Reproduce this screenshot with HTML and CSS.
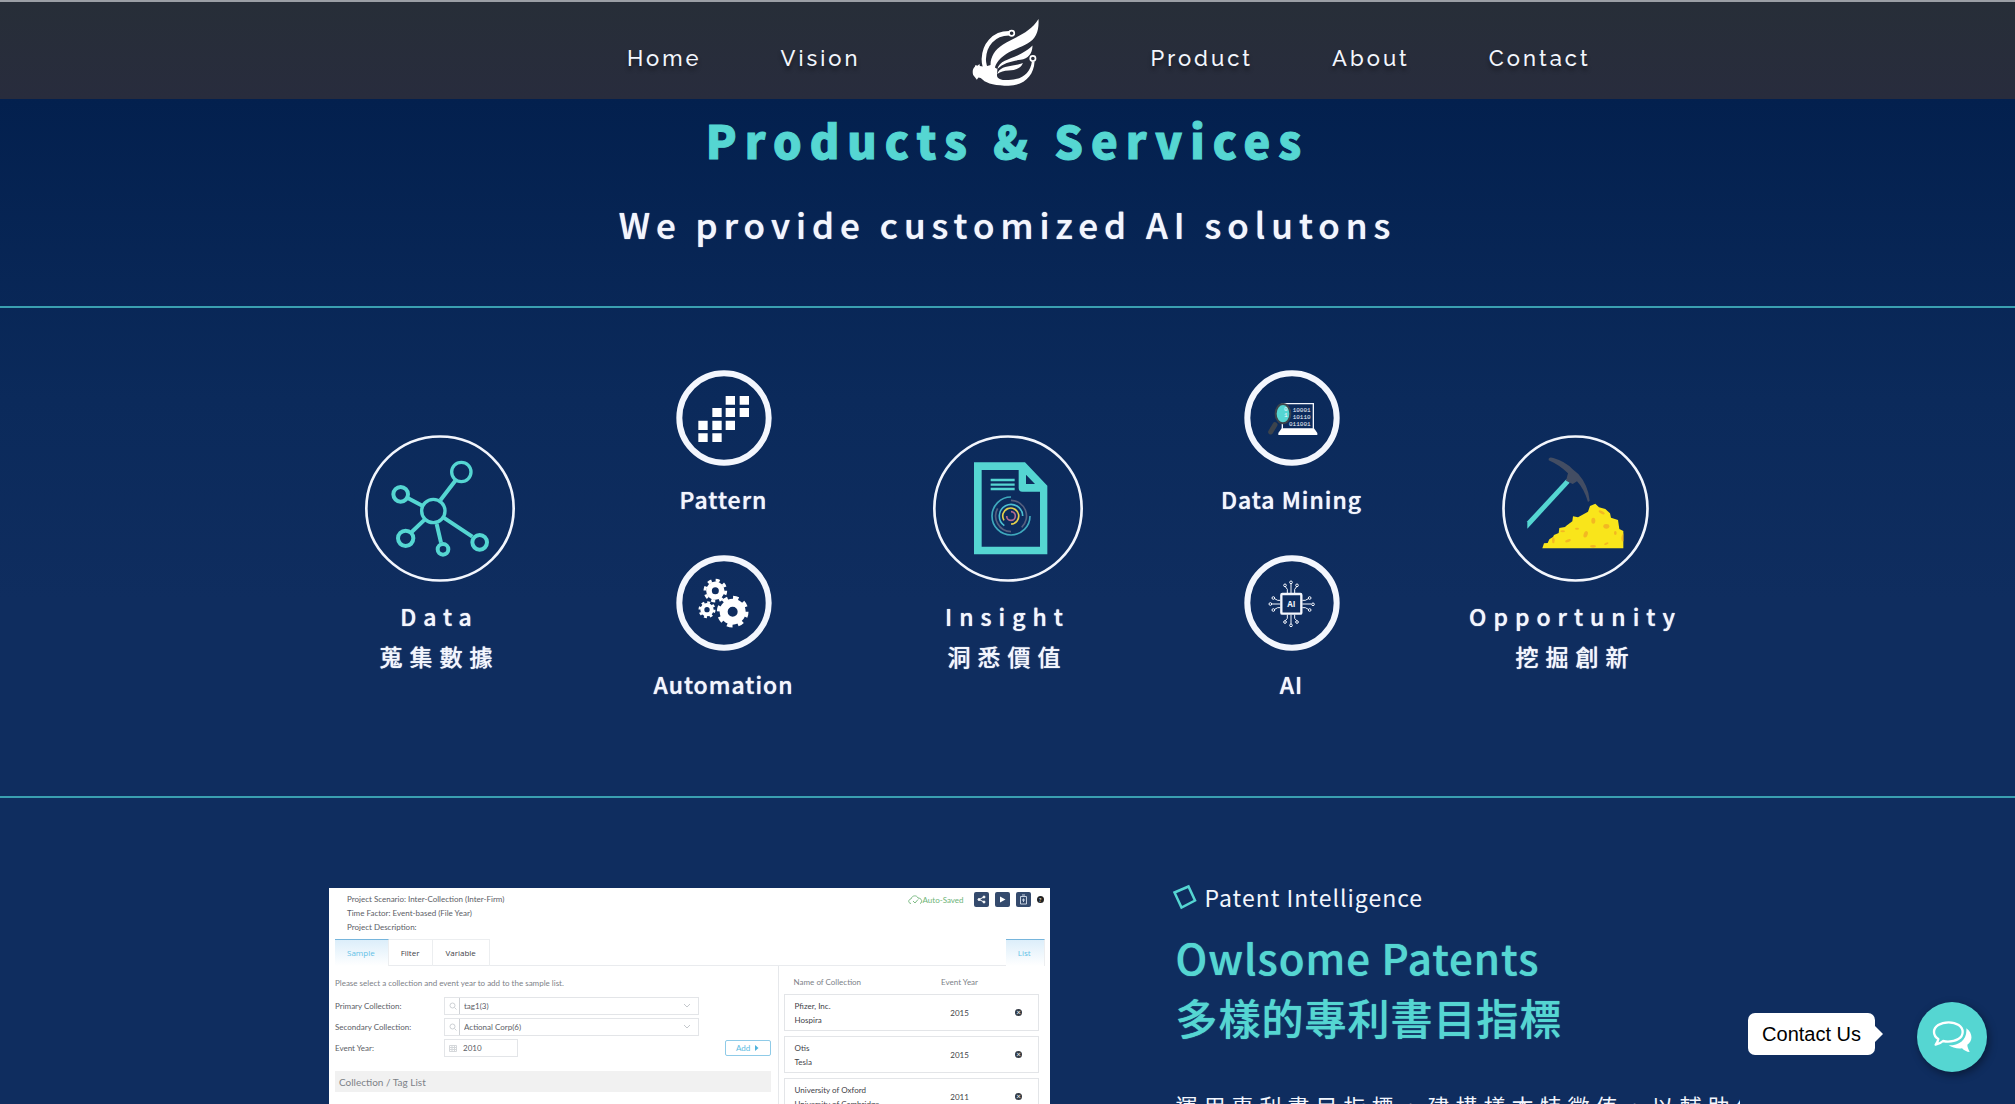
FILE: index.html
```html
<!DOCTYPE html>
<html lang="zh-Hant">
<head>
<meta charset="utf-8">
<meta name="viewport" content="width=device-width, initial-scale=1">
<title>Products &amp; Services</title>
<link rel="stylesheet" href="styles.css">
</head>
<body>
<header class="site-header">
  <nav class="nav nav-left" aria-label="Primary">
    <a href="#home">Home</a>
    <a href="#vision">Vision</a>
  </nav>
  <a class="logo" href="#home" aria-label="Homepage">
    <svg viewBox="96 54 204 208" width="68" height="69" fill="#fff">
      <path d="M296 57C298 94 288 116 264 130C235 147 190 158 171 189C166 196 165 202 164 207L152 205C148 176 162 152 188 135C225 111 270 100 296 57Z"/>
      <path d="M278 137C277 163 265 176 242 180C215 184 190 189 172 208C177 182 214 178 243 162C260 152 270 146 278 137Z"/>
      <path d="M249 190C243 206 226 212 206 212C192 213 181 215 172 223C176 204 198 200 218 197C232 195 242 193 249 190Z"/>
      <path d="M207 100C160 100 132 136 131 178C131 192 135 205 142 216" fill="none" stroke="#fff" stroke-width="13"/>
      <circle cx="215" cy="100" r="8" fill="none" stroke="#fff" stroke-width="5"/>
      <circle cx="279" cy="176" r="8" fill="none" stroke="#fff" stroke-width="5"/>
      <path d="M276 185L284 186C282 228 252 258 206 258C170 258 140 252 128 240C123 235 120 233 115 233L110 240L105 233L99 226C96 215 98 206 104 201L106 196L112 198L118 193L119 199C128 201 142 200 152 196L172 208L171 224C169 237 184 242 206 241C246 240 272 220 276 185Z"/>
    </svg>
  </a>
  <nav class="nav nav-right" aria-label="Secondary">
    <a href="#product">Product</a>
    <a href="#about">About</a>
    <a href="#contact">Contact</a>
  </nav>
</header>

<main>
  <section class="hero">
    <h1>Products &amp; Services</h1>
    <p>We provide customized AI solutons</p>
  </section>

  <section class="steps">
    <div class="step">
      <svg viewBox="72 45 450 441" width="150" height="147" fill="none" stroke="#55d6d2">
        <ellipse cx="297" cy="265.500" rx="221" ry="216" stroke="#f3f6fd" stroke-width="8"/>
        <g stroke-width="12">
          <path d="M298 241L344 181M244 257L200 234M251 299L212 336M287 312L300 368M308 293L394 350"/>
          <circle cx="277" cy="273" r="35" stroke-width="10"/>
          <circle cx="361" cy="156" r="29" stroke-width="10"/>
          <circle cx="179" cy="223" r="22"/>
          <circle cx="194" cy="355" r="23"/>
          <circle cx="306" cy="388" r="16"/>
          <circle cx="416" cy="367" r="22"/>
        </g>
      </svg>
      <h2>Data<br>蒐集數據</h2>
    </div>

    <div class="methods">
      <div class="method">
        <svg viewBox="1007 30 288 288" width="96" height="96">
          <circle cx="1151" cy="174" r="134" fill="none" stroke="#f3f6fd" stroke-width="18"/>
          <path fill="#fff" d="M1156 108h28v26h-28zM1198 108h28v26h-28zM1116 144h28v27h-28zM1156 144h28v27h-28zM1198 144h28v27h-28zM1074 182h28v28h-28zM1116 182h28v28h-28zM1156 182h28v28h-28zM1074 220h28v26h-28zM1116 220h28v26h-28z"/>
        </svg>
        <h3>Pattern</h3>
      </div>
      <div class="method">
        <svg viewBox="1007 585 288 288" width="96" height="96" fill="none">
          <circle cx="1151" cy="729" r="134" stroke="#f3f6fd" stroke-width="18"/>
          <g stroke="#fff">
            <circle cx="1125" cy="692" r="19" stroke-width="17"/>
            <circle cx="1125" cy="692" r="31" stroke-width="9" stroke-dasharray="12.200 12.150"/>
            <circle cx="1100" cy="749" r="14" stroke-width="12"/>
            <circle cx="1100" cy="749" r="22" stroke-width="7" stroke-dasharray="8.700 8.580"/>
            <circle cx="1177" cy="755" r="27" stroke-width="24"/>
            <circle cx="1177" cy="755" r="42" stroke-width="11" stroke-dasharray="16.500 16.480"/>
          </g>
        </svg>
        <h3>Automation</h3>
      </div>
    </div>

    <div class="step">
      <svg viewBox="96 45 450 441" width="150" height="147" fill="none">
        <ellipse cx="321" cy="265.500" rx="221" ry="216" stroke="#f3f6fd" stroke-width="8"/>
        <path fill="#55d6d2" fill-rule="evenodd" d="M219 127H372L439 197V403H219ZM242 150V380H417V215H364Q353 215 353 204V150ZM375 164V192H402Z"/>
        <path stroke="#55d6d2" stroke-width="7" d="M269 180H341M269 194H341M269 207H341"/>
        <g stroke-width="5">
          <path stroke="#3fa9bd" d="M330 231A57 57 0 1 0 387 288"/>
          <path stroke="#56607f" d="M330 241A47 47 0 0 1 362 322M330 335A47 47 0 0 1 290 265"/>
          <path stroke="#4bbdd0" d="M310 317A35 35 0 1 1 365 288"/>
          <path stroke="#e6d24c" d="M309 301A24 24 0 1 1 330 312"/>
          <path stroke="#b56b90" d="M330 275A13 13 0 1 1 317 288"/>
        </g>
      </svg>
      <h2>Insight<br>洞悉價值</h2>
    </div>

    <div class="methods">
      <div class="method">
        <svg viewBox="101 30 288 288" width="96" height="96">
          <circle cx="245" cy="174" r="134" fill="none" stroke="#f3f6fd" stroke-width="18"/>
          <path fill="none" stroke="#f3f6fd" stroke-width="4" d="M216 206V131H309V206"/>
          <path fill="#fff" d="M214 205H311L321 219V225H204V219Z"/>
          <g class="binary"><text x="247" y="156">10001</text><text x="247" y="177">10110</text><text x="236" y="198">011001</text></g>
          <path stroke="#3c434c" stroke-width="15" stroke-linecap="round" d="M194 194L181 216"/>
          <ellipse cx="218" cy="161" rx="22" ry="29" fill="#55d6d2" stroke="#3c434c" stroke-width="6"/>
          <g class="binary"><text x="221" y="152">0</text><text x="221" y="172">1</text></g>
        </svg>
        <h3>Data Mining</h3>
      </div>
      <div class="method">
        <svg viewBox="101 585 288 288" width="96" height="96" fill="none" stroke="#f3f6fd">
          <circle cx="245" cy="729" r="134" stroke-width="18"/>
          <rect x="213" y="702" width="60" height="59" rx="3" stroke-width="7"/>
          <g stroke-width="3">
            <path d="M242 700V672M242 764V792M210 732H185M276 732H303M231 700V688L225 680M253 700V688L259 680M231 764V775L225 782M253 764V775L259 782M210 721H202L193 716M210 743H202L193 748M276 721H285L294 716M276 743H285L294 748"/>
            <circle cx="242" cy="667" r="4"/><circle cx="242" cy="796" r="4"/><circle cx="180" cy="732" r="4"/><circle cx="308" cy="733" r="4"/>
            <circle cx="224" cy="676" r="4"/><circle cx="260" cy="676" r="4"/><circle cx="224" cy="786" r="4"/><circle cx="260" cy="786" r="4"/>
            <circle cx="189" cy="714" r="4"/><circle cx="189" cy="750" r="4"/><circle cx="298" cy="714" r="4"/><circle cx="298" cy="750" r="4"/>
          </g>
          <text class="chip" x="243" y="741">AI</text>
        </svg>
        <h3>AI</h3>
      </div>
    </div>

    <div class="step">
      <svg viewBox="158 45 441 441" width="147" height="147">
        <circle cx="378.500" cy="265.500" r="216" fill="none" stroke="#f3f6fd" stroke-width="8"/>
        <path fill="#55d6d2" d="M351 178L361 188L234 326V304Z"/>
        <path fill="#434d63" d="M298 116Q302 110 312 114Q348 124 370 148L387 162Q417 196 421 242L416 246Q404 206 383 184L370 192L350 182L356 160Q332 136 298 121Z"/>
        <path fill="#f9e51b" d="M279 385L284 370L295 369L300 358L311 351L314 345L328 339L330 324L347 321L351 317L369 304L371 289L386 292L416 275L422 258L438 251L449 262L468 267L482 280L485 293L506 300L510 327L522 333V385Z"/>
        <g fill="#f3b822">
          <ellipse cx="432" cy="302" rx="6" ry="9"/><ellipse cx="471" cy="319" rx="9" ry="7"/><ellipse cx="409" cy="343" rx="6" ry="10" transform="rotate(20 409 343)"/>
          <ellipse cx="383" cy="326" rx="6" ry="3"/><ellipse cx="356" cy="362" rx="9" ry="4" transform="rotate(-20 356 362)"/><ellipse cx="312" cy="361" rx="4" ry="9"/>
          <ellipse cx="457" cy="277" rx="10" ry="4" transform="rotate(30 457 277)"/><ellipse cx="498" cy="339" rx="4" ry="6"/><ellipse cx="471" cy="371" rx="7" ry="3" transform="rotate(-25 471 371)"/>
          <ellipse cx="431" cy="379" rx="9" ry="4"/><ellipse cx="340" cy="334" rx="7" ry="3"/><path d="M522 340Q512 352 518 364H522Z"/>
        </g>
      </svg>
      <h2>Opportunity<br>挖掘創新</h2>
    </div>
  </section>

  <section class="product">
    <div class="panel">
      <div class="panel-head">
        <div class="project">
          <p>Project Scenario: Inter-Collection (Inter-Firm)</p>
          <p>Time Factor: Event-based (File Year)</p>
          <p>Project Description:</p>
        </div>
        <div class="tools">
          <span class="saved">
            <svg viewBox="0 0 15 10" width="15" height="10" fill="none" stroke="#7dbb84"><path d="M3 8.500C-.5 8 .5 4 3 4C4 0 9 0 10 3C14 3 15 7.500 12 8.500M5 6L7 8L10 4.500"/></svg>Auto-Saved</span>
          <button type="button" class="tool" aria-label="Share"><svg viewBox="0 0 9 9" width="9" height="9" fill="#fff" stroke="#fff"><path fill="none" d="M7 2L2 4.500L7 7"/><circle cx="7" cy="2" r="1"/><circle cx="2" cy="4.500" r="1"/><circle cx="7" cy="7" r="1"/></svg></button>
          <button type="button" class="tool" aria-label="Run"><svg viewBox="0 0 9 9" width="9" height="9" fill="#fff"><path d="M2 1.500L7.500 4.500L2 7.500Z"/></svg></button>
          <button type="button" class="tool" aria-label="Clipboard"><svg viewBox="0 0 9 11" width="9" height="11" fill="none" stroke="#c5cfdf"><path d="M1.500 2.500H7.500V10H1.500ZM3 1H6M4.500 4.500V8M3 6H6"/></svg></button>
          <button type="button" class="help" aria-label="Help">?</button>
        </div>
      </div>
      <div class="tabs">
        <button type="button" class="tab active">Sample</button>
        <button type="button" class="tab">Filter</button>
        <button type="button" class="tab">Variable</button>
        <button type="button" class="tab active last">List</button>
      </div>
      <div class="panel-body">
        <form class="sample">
          <p class="hint">Please select a collection and event year to add to the sample list.</p>
          <div class="field">
            <label for="primary">Primary Collection:</label>
            <span class="box"><svg viewBox="0 0 8 8" width="8" height="8" fill="none" stroke="#cdd0d4"><circle cx="3.500" cy="3.500" r="2.500"/><path d="M5.500 5.500L7.500 7.500"/></svg>
            <select id="primary"><option>tag1(3)</option></select>
            <svg class="chev" viewBox="0 0 8 6" width="8" height="6" fill="none" stroke="#c4c8cc"><path d="M1 1L4 4L7 1"/></svg></span>
          </div>
          <div class="field">
            <label for="secondary">Secondary Collection:</label>
            <span class="box"><svg viewBox="0 0 8 8" width="8" height="8" fill="none" stroke="#cdd0d4"><circle cx="3.500" cy="3.500" r="2.500"/><path d="M5.500 5.500L7.500 7.500"/></svg>
            <select id="secondary"><option>Actional Corp(6)</option></select>
            <svg class="chev" viewBox="0 0 8 6" width="8" height="6" fill="none" stroke="#c4c8cc"><path d="M1 1L4 4L7 1"/></svg></span>
          </div>
          <div class="field">
            <label for="year">Event Year:</label>
            <span class="box year"><svg viewBox="0 0 8 8" width="8" height="8" fill="none" stroke="#d4d7da"><path d="M.5 1.500H7.500V7.500H.5ZM.5 3.500H7.500M3 1.500V7.500M5.500 1.500V7.500M.5 5.500H7.500"/></svg>
            <input id="year" type="text" value="2010"></span>
            <button type="button" class="add">Add <svg viewBox="0 0 5 6" width="5" height="6" fill="#4fb3dc"><path d="M1 0L4.500 3L1 6Z"/></svg></button>
          </div>
          <h4>Collection / Tag List</h4>
          <p class="note">To remove, select your collection/tag from the list below.</p>
        </form>
        <div class="list">
          <table>
            <thead><tr><th class="name">Name of Collection</th><th class="when">Event Year</th><th></th></tr></thead>
            <tbody>
              <tr><td class="name">Pfizer, Inc.<br>Hospira</td><td>2015</td><td><button type="button" class="remove" aria-label="Remove">×</button></td></tr>
              <tr><td class="name">Otis<br>Tesla</td><td>2015</td><td><button type="button" class="remove" aria-label="Remove">×</button></td></tr>
              <tr><td class="name">University of Oxford<br>University of Cambridge</td><td>2011</td><td><button type="button" class="remove" aria-label="Remove">×</button></td></tr>
            </tbody>
          </table>
        </div>
      </div>
    </div>

    <div class="intro">
      <p class="kicker"><svg viewBox="0 0 30 30" width="30" height="30" fill="none" stroke="#55d6d2" stroke-width="2.500"><path d="M2.500 10.500L16.500 4.500L23 18.500L9.500 25.500Z"/></svg>Patent Intelligence</p>
      <h2>Owlsome Patents<br>多樣的專利書目指標</h2>
      <p class="lead">運用專利書目指標，建構樣本特徵值，以輔助使用者</p>
    </div>
  </section>
</main>

<div class="chat">
  <span class="tip" id="chat-tip">Contact Us</span>
  <button type="button" class="chat-button" aria-labelledby="chat-tip">
    <svg viewBox="0 0 120 96" width="40" height="32">
      <path fill="#fff" d="M103 22C125 38 121 62 106 71C106 79 110 86 113 93C104 93 96 88 90 82C76 84 60 80 50 73C80 74 106 58 103 22Z"/>
      <path fill="none" stroke="#fff" stroke-width="7" stroke-linejoin="round" d="M50 4C74 4 92 16 92 33C92 51 72 62 48 62C42 62 37 61 33 60C27 66 20 69 11 71C15 66 18 61 19 54C9 48 6 41 6 33C6 16 25 4 50 4Z"/>
    </svg>
  </button>
</div>
</body>
</html>
```
FILE: styles.css
```css
* { box-sizing: border-box; margin: 0; padding: 0; }

:root {
  --teal: #55d6d2;
  --light: #f3f6fd;
  --rule: #3a9fb0;
}

body {
  display: flex;
  flex-direction: column;
  height: 100vh;
  overflow: hidden;
  color: var(--light);
  font-family: "Noto Sans CJK TC", sans-serif;
  background: linear-gradient(#03204e 99px, #0b2a5b 400px, #0f2d5f 600px);
}

button, input, select { font: inherit; color: inherit; border: 0; background: none; }
svg { display: block; flex: none; }

/* Header */
.site-header {
  display: grid;
  grid-template-columns: 1fr auto 1fr;
  align-items: center;
  column-gap: 111px;
  flex: none;
  height: 99px;
  padding: 4px 4px 0 0;
  border-top: 2px solid #9b9fa5;
  background: linear-gradient(#272e38, #282c3d);
}
.nav { display: flex; gap: 79px; padding-top: 10px; }
.nav-left { justify-content: flex-end; }
.nav a {
  color: var(--light);
  font: 500 22px/32px Raleway, Lato, sans-serif;
  letter-spacing: 3px;
  text-decoration: none;
  text-shadow: 0 4px 4px rgba(0, 0, 0, .4);
}

main { flex: 1; min-height: 0; }

/* Title */
.hero {
  padding: 7px 0 56px;
  border-bottom: 2px solid var(--rule);
  text-align: center;
}
.hero h1 {
  margin-bottom: 25px;
  color: var(--teal);
  font-size: 45px;
  font-weight: 900;
  line-height: 68px;
  letter-spacing: 8px;
  -webkit-text-stroke: 1px;
}
.hero p {
  padding-bottom: 1px;
  font-size: 35px;
  font-weight: 500;
  line-height: 50px;
  letter-spacing: 6px;
  text-shadow: 0 0 1px;
}

/* Process */
.steps {
  display: grid;
  grid-template-columns: repeat(5, 284px);
  justify-content: center;
  padding: 62px 0 92px;
  border-bottom: 2px solid var(--rule);
  text-align: center;
}
.step svg, .method svg { margin: 0 auto; }
.step { padding-top: 65px; }
.step h2 {
  margin-top: 14px;
  font-size: 23px;
  font-weight: 500;
  line-height: 40px;
  letter-spacing: 7px;
  text-shadow: 0 0 1px;
}
.methods { display: flex; flex-direction: column; gap: 36px; }
.method h3 {
  margin-top: 13px;
  font-size: 23px;
  font-weight: 500;
  line-height: 40px;
  letter-spacing: 1px;
  text-shadow: 0 0 1px;
}
.binary { fill: #f3f6fd; font: 400 18px "Liberation Mono", monospace; }
.chip { fill: #f3f6fd; stroke: none; font: 700 24px "Open Sans", sans-serif; text-anchor: middle; }

/* Product */
.product {
  display: grid;
  grid-template-columns: 9fr 7fr;
  column-gap: 126px;
  padding: 83px 279px 0 329px;
}
.intro { overflow: hidden; margin: 0 -4px; padding-left: 4px; }
.kicker {
  display: flex;
  align-items: center;
  gap: 3px;
  margin-left: -4px;
  font-size: 23px;
  line-height: 32px;
  letter-spacing: 1px;
}
.intro h2 {
  margin-top: 14px;
  color: var(--teal);
  font-size: 42px;
  font-weight: 500;
  line-height: 60px;
  letter-spacing: 1px;
  text-shadow: 0 0 1px;
}
.lead {
  margin-top: 38px;
  font-size: 22px;
  line-height: 40px;
  letter-spacing: 6px;
  white-space: nowrap;
}

/* Application panel */
.panel {
  margin-top: 7px;
  padding: 0 5px 0 6px;
  color: #5c6066;
  background: #fff;
  font: 8px/14px Lato, sans-serif;
}
.panel-head { display: flex; justify-content: space-between; height: 51px; padding: 4px 0 0 12px; }
.tools { display: flex; align-items: center; gap: 6px; height: 15px; }
.saved { display: flex; align-items: center; margin-right: 4px; color: #6db477; }
.tool { display: flex; align-items: center; justify-content: center; width: 15px; height: 15px; border-radius: 2px; background: #344a6d; }
.help { width: 7px; height: 7px; margin-right: 1px; border-radius: 50%; color: #fff; background: #222; font-size: 6px; line-height: 7px; }

.tabs { display: flex; height: 27px; border-bottom: 1px solid #e9ebee; }
.tab { padding: 0 13px 0 12px; height: 27px; border: 1px solid #eceef0; border-left: 0; border-bottom: 0; color: #3f4348; font-family: "Open Sans", sans-serif; }
.tab.active { border-top: 1px solid #76b5dc; color: #63c1e6; background: linear-gradient(#dceefa, #fff); }
.tab.last { margin-left: auto; }

.panel-body { display: flex; }
.sample { flex: 1; padding-right: 7px; }
.hint { margin: 10px 0 7px; color: #7d8187; }
.field { display: flex; align-items: center; height: 18px; margin-bottom: 3px; }
.field label { width: 109px; }
.box { display: flex; align-items: center; width: 255px; height: 18px; padding: 0 7px 0 4px; border: 1px solid #e3e5e8; }
.box select, .box input { flex: 1; width: 20px; height: 16px; margin-left: 2px; padding-left: 4px; appearance: none; }
.box select { border-left: 1px solid #cfd2d6; }
.box.year { width: 74px; }
.add { display: flex; align-items: center; justify-content: center; gap: 4px; width: 46px; height: 16px; margin-left: auto; border: 1px solid #8fcbe8; border-radius: 2px; color: #5bbbe2; }
.sample h4 { height: 21px; margin-top: 14px; padding-left: 4px; color: #7d8187; background: #f1f1f1; font-size: 10px; font-weight: 400; line-height: 22px; }
.note { margin: 8px 0 0 6px; }

.list { width: 267px; padding: 4px 6px 0 5px; border-left: 1px solid #e6e8eb; }
.list table { width: 100%; table-layout: fixed; border-collapse: separate; border-spacing: 0 5px; color: #3f4348; }
.list th { height: 14px; color: #7d8187; font-weight: 400; }
.list td { height: 37px; border: 1px solid #e3e5e8; border-width: 1px 0; text-align: center; }
.list td:last-child { border-right-width: 1px; }
.list td.name { border-left-width: 1px; }
.list .name { width: 136px; padding-left: 10px; text-align: left; }
.list .when { width: 80px; }
.remove { display: block; width: 7px; height: 7px; margin: 0 auto; border-radius: 50%; color: #fff; background: #333a44; line-height: 7px; }

/* Chat launcher floats above the page */
.chat { position: fixed; right: 28px; bottom: 32px; display: flex; align-items: center; gap: 42px; }
.tip {
  position: relative;
  margin-bottom: 6px;
  padding: 0 14px;
  border-radius: 7px;
  color: #000;
  background: #fff;
  font: 20px/42px "Liberation Sans", Arial, sans-serif;
}
.tip::after {
  content: "";
  position: absolute;
  top: 13px;
  left: 100%;
  border: 8px solid transparent;
  border-left-color: #fff;
  border-right-width: 0;
}
.chat-button {
  display: flex;
  align-items: center;
  justify-content: center;
  width: 70px;
  height: 70px;
  border-radius: 50%;
  background: var(--teal);
  box-shadow: 2px 3px 8px rgba(0, 0, 0, .4);
}
```
